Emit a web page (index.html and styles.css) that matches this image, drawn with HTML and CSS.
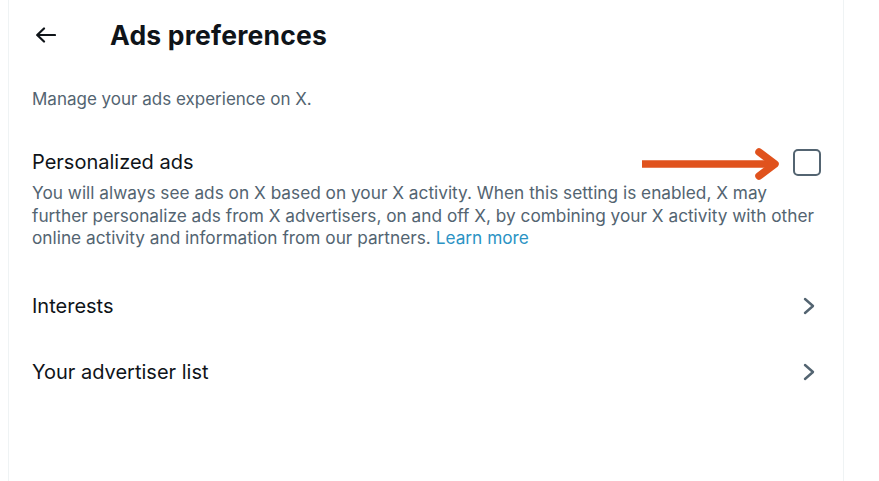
FILE: index.html
```html
<!DOCTYPE html>
<html lang="en">
<head>
<meta charset="utf-8">
<title>Ads preferences</title>
<link rel="stylesheet" href="styles.css">
</head>
<body>
<div class="page">
  <div class="gutter"></div>
  <main class="column">
    <header class="header">
      <span class="back" aria-label="Back">
        <svg viewBox="0 0 21 16" width="21" height="16"><path d="M20 8H2.5M9 1.5L2.2 8 9 14.5" fill="none" stroke="#0f1419" stroke-width="2.2" stroke-linecap="round" stroke-linejoin="round"/></svg>
      </span>
      <h1 class="title">Ads preferences</h1>
    </header>
    <p class="intro">Manage your ads experience on X.</p>
    <section class="setting">
      <div class="setting-head">
        <span class="setting-title">Personalized ads</span>
        <span class="checkbox"></span>
        <svg class="annot-arrow" viewBox="0 0 142 32" width="142" height="32"><path d="M3 16H133" stroke="#e0521d" stroke-width="7.5" stroke-linecap="butt"/><path d="M120 4L136 16 120 28" fill="none" stroke="#e0521d" stroke-width="7.5" stroke-linecap="round" stroke-linejoin="round"/></svg>
      </div>
      <p class="setting-desc">You will always see ads on X based on your X activity. When this setting is enabled, X may further personalize ads from X advertisers, on and off X, by combining your X activity with other online activity and information from our partners. <a class="link">Learn more</a></p>
    </section>
    <a class="row"><span>Interests</span><svg viewBox="0 0 12 18" width="12" height="18"><path d="M2 2l8 7-8 7" fill="none" stroke="#536471" stroke-width="2.4" stroke-linecap="round" stroke-linejoin="round"/></svg></a>
    <a class="row"><span>Your advertiser list</span><svg viewBox="0 0 12 18" width="12" height="18"><path d="M2 2l8 7-8 7" fill="none" stroke="#536471" stroke-width="2.4" stroke-linecap="round" stroke-linejoin="round"/></svg></a>
  </main>
  <div class="rest"></div>
</div>
</body>
</html>
```

FILE: styles.css
```css
* { box-sizing: border-box; }
html, body { margin: 0; padding: 0; background: #fff; }
body {
  font-family: Inter, Roboto, "Liberation Sans", sans-serif;
  color: #0f1419;
  -webkit-font-smoothing: antialiased;
}
.page {
  display: flex;
  min-height: 481px;
}
.gutter { width: 8px; flex: none; }
.column {
  width: 836px;
  flex: none;
  border-left: 1px solid #eff3f4;
  border-right: 1px solid #eff3f4;
  min-height: 481px;
}
.rest { flex: 1; }
.header {
  height: 70px;
  display: flex;
  align-items: center;
  padding-left: 26px;
}
.back {
  width: 21px;
  height: 16px;
  display: flex;
  margin-right: 54px;
}
.title {
  margin: 0;
  font-size: 26.5px;
  font-weight: 700;
  letter-spacing: 0.2px;
  line-height: 30px;
}
.intro {
  margin: 17px 0 0;
  padding-left: 23px;
  font-size: 17px;
  line-height: 24px;
  color: #536471;
}
.setting {
  padding: 0 20px 0 23px;
  margin-top: 37px;
}
.setting-head {
  position: relative;
  height: 28px;
  display: flex;
  align-items: center;
  justify-content: space-between;
  margin-right: 2px;
}
.setting-title {
  font-size: 20px;
  line-height: 28px;
}
.checkbox {
  width: 28px;
  height: 27px;
  border: 2.5px solid #536471;
  border-radius: 5px;
}
.annot-arrow {
  position: absolute;
  right: 40px;
  top: 0;
}
.setting-desc {
  margin: 6px 0 0;
  font-size: 17.25px;
  line-height: 22.5px;
  color: #536471;
}
.link { color: #2b93c4; text-decoration: none; }
.row {
  height: 66px;
  display: flex;
  align-items: center;
  justify-content: space-between;
  padding: 0 28px 0 23px;
  font-size: 20px;
  color: #0f1419;
}
.setting + .row { margin-top: 23px; }
```
